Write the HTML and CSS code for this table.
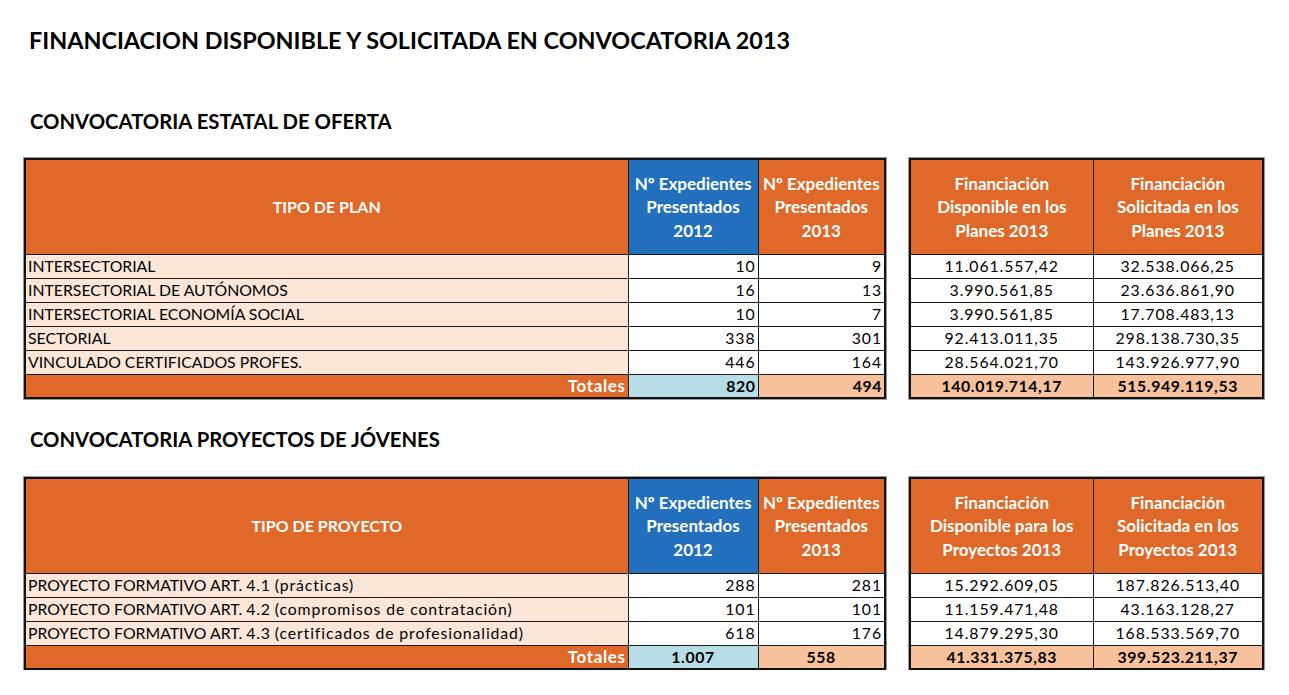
FILE: index.html
```html
<!DOCTYPE html>
<html lang="es">
<head>
<meta charset="utf-8">
<title>Financiación disponible y solicitada</title>
<link rel="stylesheet" href="styles.css">
</head>
<body>
<div class="page">
  <h1 class="title">FINANCIACION DISPONIBLE Y SOLICITADA EN CONVOCATORIA 2013</h1>

  <section class="block block-first">
    <h2 class="subtitle">CONVOCATORIA ESTATAL DE OFERTA</h2>
    <div class="tables">
      <table class="grid grid-left">
        <colgroup><col class="c-name"><col class="c-n12"><col class="c-n13"></colgroup>
        <thead>
          <tr class="head">
            <th class="h-orange h-small">TIPO DE PLAN</th>
            <th class="h-blue">Nº Expedientes<br>Presentados<br>2012</th>
            <th class="h-orange">Nº Expedientes<br>Presentados<br>2013</th>
          </tr>
        </thead>
        <tbody>
          <tr class="row"><td class="name">INTERSECTORIAL</td><td class="num">10</td><td class="num">9</td></tr>
          <tr class="row"><td class="name">INTERSECTORIAL DE AUTÓNOMOS</td><td class="num">16</td><td class="num">13</td></tr>
          <tr class="row"><td class="name">INTERSECTORIAL ECONOMÍA SOCIAL</td><td class="num">10</td><td class="num">7</td></tr>
          <tr class="row"><td class="name">SECTORIAL</td><td class="num">338</td><td class="num">301</td></tr>
          <tr class="row"><td class="name">VINCULADO CERTIFICADOS PROFES.</td><td class="num">446</td><td class="num">164</td></tr>
          <tr class="row total"><td class="tot-label">Totales</td><td class="num tot-blue">820</td><td class="num tot-peach">494</td></tr>
        </tbody>
      </table>
      <table class="grid grid-right">
        <colgroup><col class="c-disp"><col class="c-sol"></colgroup>
        <thead>
          <tr class="head">
            <th class="h-orange">Financiación<br>Disponible en los<br>Planes 2013</th>
            <th class="h-orange">Financiación<br>Solicitada en los<br>Planes 2013</th>
          </tr>
        </thead>
        <tbody>
          <tr class="row"><td class="money">11.061.557,42</td><td class="money">32.538.066,25</td></tr>
          <tr class="row"><td class="money">3.990.561,85</td><td class="money">23.636.861,90</td></tr>
          <tr class="row"><td class="money">3.990.561,85</td><td class="money">17.708.483,13</td></tr>
          <tr class="row"><td class="money">92.413.011,35</td><td class="money">298.138.730,35</td></tr>
          <tr class="row"><td class="money">28.564.021,70</td><td class="money">143.926.977,90</td></tr>
          <tr class="row total"><td class="money tot-peach">140.019.714,17</td><td class="money tot-peach">515.949.119,53</td></tr>
        </tbody>
      </table>
    </div>
  </section>

  <section class="block block-second">
    <h2 class="subtitle">CONVOCATORIA PROYECTOS DE JÓVENES</h2>
    <div class="tables">
      <table class="grid grid-left">
        <colgroup><col class="c-name"><col class="c-n12"><col class="c-n13"></colgroup>
        <thead>
          <tr class="head">
            <th class="h-orange h-small">TIPO DE PROYECTO</th>
            <th class="h-blue">Nº Expedientes<br>Presentados<br>2012</th>
            <th class="h-orange">Nº Expedientes<br>Presentados<br>2013</th>
          </tr>
        </thead>
        <tbody>
          <tr class="row"><td class="name">PROYECTO FORMATIVO ART. <span class="num-txt">4.1</span> <span class="lc">(prácticas)</span></td><td class="num">288</td><td class="num">281</td></tr>
          <tr class="row"><td class="name">PROYECTO FORMATIVO ART. <span class="num-txt">4.2</span> <span class="lc">(compromisos de contratación)</span></td><td class="num">101</td><td class="num">101</td></tr>
          <tr class="row"><td class="name">PROYECTO FORMATIVO ART. <span class="num-txt">4.3</span> <span class="lc">(certificados de profesionalidad)</span></td><td class="num">618</td><td class="num">176</td></tr>
          <tr class="row total"><td class="tot-label">Totales</td><td class="money tot-blue">1.007</td><td class="money tot-peach">558</td></tr>
        </tbody>
      </table>
      <table class="grid grid-right">
        <colgroup><col class="c-disp"><col class="c-sol"></colgroup>
        <thead>
          <tr class="head">
            <th class="h-orange">Financiación<br>Disponible para los<br>Proyectos 2013</th>
            <th class="h-orange">Financiación<br>Solicitada en los<br>Proyectos 2013</th>
          </tr>
        </thead>
        <tbody>
          <tr class="row"><td class="money">15.292.609,05</td><td class="money">187.826.513,40</td></tr>
          <tr class="row"><td class="money">11.159.471,48</td><td class="money">43.163.128,27</td></tr>
          <tr class="row"><td class="money">14.879.295,30</td><td class="money">168.533.569,70</td></tr>
          <tr class="row total"><td class="money tot-peach">41.331.375,83</td><td class="money tot-peach">399.523.211,37</td></tr>
        </tbody>
      </table>
    </div>
  </section>
</div>
</body>
</html>
```

FILE: styles.css
```css
* { box-sizing: border-box; }

html, body {
  margin: 0;
  padding: 0;
  background: #ffffff;
}

body {
  font-family: Lato, "Open Sans", "Liberation Sans", sans-serif;
  color: #000;
}

.page {
  padding: 25px 0 0 24px;
  width: 1289px;
}

.title {
  margin: 0 0 0 5px;
  font-size: 23.4px;
  line-height: 30px;
  font-weight: 700;
}

.block-first { margin-top: 54px; }
.block-second { margin-top: 28px; }

.subtitle {
  margin: 0 0 25px 6px;
  font-size: 20.3px;
  line-height: 24px;
  font-weight: 700;
}

.block-second .subtitle { margin-bottom: 26px; }

.tables {
  display: flex;
  gap: 23px;
  align-items: flex-start;
}

.grid {
  border-collapse: collapse;
  table-layout: fixed;
  border: 2px solid #111;
  box-shadow: 0 0 0 1px #9a9a9a;
  font-size: 15.8px;
}

.grid-left { width: 860px; }
.grid-right { width: 353px; }

.c-name { width: 603px; }
.c-n12 { width: 130px; }
.c-n13 { width: 127px; }
.c-disp { width: 183px; }
.c-sol { width: 170px; }

.grid th,
.grid td {
  border: 1px solid #1a1a1a;
  padding: 0 2px;
}

.head { height: 95px; }

.grid th {
  color: #fff;
  font-weight: 700;
  font-size: 17px;
  line-height: 23.5px;
  text-align: center;
  padding: 0 1px;
  white-space: nowrap;
}

.grid th.h-small { font-size: 16px; }

.h-orange { background: #e06828; }
.h-blue { background: #2270bd; }

.row { height: 24px; }

.grid td { line-height: 22px; white-space: nowrap; }

.name {
  background: #fce6d8;
  text-align: left;
  padding-left: 4px;
}

.lc { letter-spacing: 0.9px; }
.num-txt { letter-spacing: 0.8px; }

.num {
  background: #fff;
  text-align: right;
  letter-spacing: 0.9px;
  padding-right: 1px;
}

.money {
  background: #fff;
  text-align: center;
  letter-spacing: 0.9px;
}

.total td { font-weight: 700; }
.total .money,
.total .num { letter-spacing: 0.6px; }

.tot-label {
  background: #e06828;
  color: #fff;
  text-align: right;
  font-size: 17px;
  letter-spacing: 0.6px;
}

.grid .tot-blue { background: #b7dde7; }
.grid .tot-peach { background: #f7c29b; }
```
